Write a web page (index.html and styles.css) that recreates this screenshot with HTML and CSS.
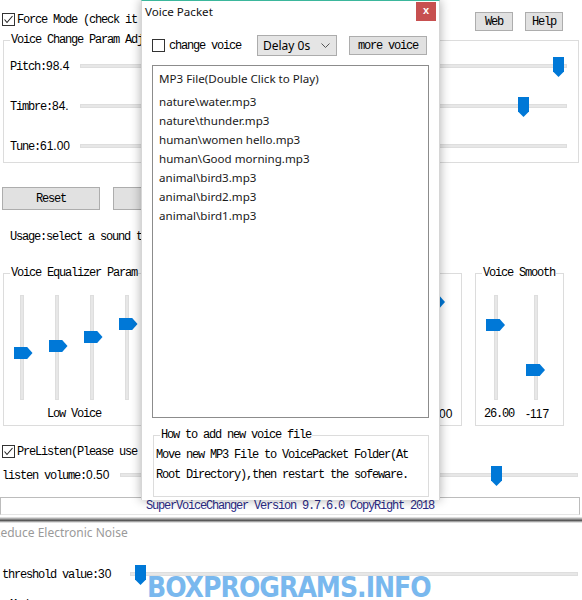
FILE: index.html
```html
<!DOCTYPE html>
<html>
<head>
<meta charset="utf-8">
<link rel="stylesheet" href="styles.css">
</head>
<body>
<div class="screen">
  <div class="main">
    <div class="toprow">
      <label class="check">
        <svg class="box" viewBox="0 0 13 13"><rect x="0.5" y="0.5" width="12" height="12" fill="#fff" stroke="#333"/><polyline points="2.5,6.5 5,9.5 10.5,3" fill="none" stroke="#222" stroke-width="1.1"/></svg>
        <span>Force Mode (check it to change voice)</span>
      </label>
      <div class="topbtns">
        <button class="btn small">Web</button>
        <button class="btn small">Help</button>
      </div>
    </div>

    <fieldset class="group g-adjust">
      <legend>Voice Change Param Adjust</legend>
      <div class="hrow">
        <span class="lbl">Pitch:<span class="num">98.4</span></span>
        <div class="htrack t-adjust"><span class="hthumb" style="left:472px"></span></div>
      </div>
      <div class="hrow">
        <span class="lbl">Timbre:<span class="num">84.</span></span>
        <div class="htrack t-adjust"><span class="hthumb" style="left:437px"></span></div>
      </div>
      <div class="hrow">
        <span class="lbl">Tune:<span class="num">61.00</span></span>
        <div class="htrack t-adjust"><span class="hthumb" style="left:200px"></span></div>
      </div>
    </fieldset>

    <div class="btnrow">
      <button class="btn wide">Reset</button>
      <button class="btn wide">Test</button>
    </div>

    <div class="usage">Usage:select a sound type and adjust the params</div>

    <div class="eqrow">
      <fieldset class="group g-eq">
        <legend>Voice Equalizer Param</legend>
        <div class="vsliders">
          <div class="vcol"><div class="vtrack"><span class="vthumb" style="top:51px"></span></div></div>
          <div class="vcol"><div class="vtrack"><span class="vthumb" style="top:44px"></span></div></div>
          <div class="vcol"><div class="vtrack"><span class="vthumb" style="top:35px"></span></div></div>
          <div class="vcol"><div class="vtrack"><span class="vthumb" style="top:22px"></span></div></div>
          <div class="vcol"><div class="vtrack"><span class="vthumb" style="top:30px"></span></div></div>
          <div class="vcol"><div class="vtrack"><span class="vthumb" style="top:40px"></span></div></div>
          <div class="vcol"><div class="vtrack"><span class="vthumb" style="top:50px"></span></div></div>
          <div class="vcol"><div class="vtrack"><span class="vthumb" style="top:52px"></span></div></div>
        </div>
        <div class="eqlabels">
          <span class="eqlabel">Low Voice</span>
          <span class="eqlabel">High Voice</span>
        </div>
      </fieldset>

      <fieldset class="group g-reduce">
        <legend>Noise Reduce</legend>
        <div class="vsliders v-right">
          <div class="vcol w40"><div class="vtrack"><span class="vthumb" style="top:40px"></span></div></div>
          <div class="vcol w40"><div class="vtrack"><span class="vthumb" style="top:0px"></span></div></div>
        </div>
        <div class="vvalues v-right">
          <span class="vval">50.00</span>
          <span class="vval">100.00</span>
        </div>
      </fieldset>

      <fieldset class="group g-smooth">
        <legend>Voice Smooth</legend>
        <div class="vsliders">
          <div class="vcol w40"><div class="vtrack"><span class="vthumb wide" style="top:23px"></span></div></div>
          <div class="vcol w40"><div class="vtrack"><span class="vthumb wide" style="top:68px"></span></div></div>
        </div>
        <div class="vvalues">
          <span class="vval mono">26.00</span>
          <span class="vval">-117</span>
        </div>
      </fieldset>
    </div>

    <label class="check pre">
      <svg class="box" viewBox="0 0 13 13"><rect x="0.5" y="0.5" width="12" height="12" fill="#fff" stroke="#333"/><polyline points="2.5,6.5 5,9.5 10.5,3" fill="none" stroke="#222" stroke-width="1.1"/></svg>
      <span>PreListen(Please use headset)</span>
    </label>

    <div class="hrow volume">
      <span class="lbl vlbl">listen volume:<span class="num">0.50</span></span>
      <div class="htrack t-volume"><span class="hthumb" style="left:370px"></span></div>
    </div>

    <div class="status">SuperVoiceChanger Version 9.7.6.0 CopyRight 2018</div>
  </div>

  <div class="edge"></div>

  <div class="second">
    <div class="sec-title">Reduce Electronic Noise</div>
    <div class="hrow thresh">
      <span class="lbl tlbl">threshold value:<span class="num">30</span></span>
      <div class="htrack t-thresh"><span class="hthumb" style="left:4px"></span></div>
    </div>
    <div class="mode">Mode</div>
  </div>

  <div class="dialog">
    <div class="dlg-title">
      <span class="dlg-name">Voice Packet</span>
      <span class="dlg-close">x</span>
    </div>
    <div class="dlg-body">
      <div class="dlg-row">
        <label class="check dcheck">
          <svg class="box" viewBox="0 0 13 13"><rect x="0.5" y="0.5" width="12" height="12" fill="#fff" stroke="#333"/></svg>
          <span>change voice</span>
        </label>
        <div class="select">
          <span>Delay 0s</span>
          <svg class="chev" viewBox="0 0 9 5"><polyline points="0.5,0.5 4.5,4.5 8.5,0.5" fill="none" stroke="#555" stroke-width="1"/></svg>
        </div>
        <button class="btn more">more voice</button>
      </div>
      <div class="listbox">
        <div class="lhead">MP3 File(Double Click to Play)</div>
        <div class="litem">nature\water.mp3</div>
        <div class="litem">nature\thunder.mp3</div>
        <div class="litem">human\women hello.mp3</div>
        <div class="litem">human\Good morning.mp3</div>
        <div class="litem">animal\bird3.mp3</div>
        <div class="litem">animal\bird2.mp3</div>
        <div class="litem">animal\bird1.mp3</div>
      </div>
      <fieldset class="group g-howto">
        <legend>How to add new voice file</legend>
        <div class="howto">Move new MP3 File to VoicePacket Folder(At<br>Root Directory),then restart the sofeware.</div>
      </fieldset>
    </div>
  </div>

  <div class="watermark">BOXPROGRAMS.INFO</div>
</div>
</body>
</html>
```

FILE: styles.css
```css
* { box-sizing: border-box; }

body {
  margin: 0;
  background: #fff;
}

.screen {
  position: relative;
  width: 582px;
  height: 600px;
  overflow: hidden;
  background: #fff;
  font-family: "Liberation Mono", monospace;
  font-size: 12px;
  line-height: 12px;
  letter-spacing: -1.2px;
  color: #000;
}

.num {
  font-family: "Liberation Sans", sans-serif;
  letter-spacing: 0;
}

/* ---------- top row ---------- */
.toprow {
  display: flex;
  justify-content: space-between;
  align-items: flex-start;
  height: 32px;
  padding-top: 12px;
}

.check {
  display: flex;
  align-items: center;
  gap: 2px;
  margin-left: 2px;
  margin-top: 1px;
  height: 13px;
  white-space: nowrap;
}

.box {
  width: 13px;
  height: 13px;
  flex: none;
  display: block;
}

.topbtns {
  display: flex;
  gap: 12px;
  margin-right: 19px;
}

.btn {
  font: inherit;
  letter-spacing: inherit;
  color: #000;
  background: #e1e1e1;
  border: 1px solid #adadad;
  padding: 0;
  margin: 0;
}

.btn.small {
  width: 38px;
  height: 19px;
}

.btn.wide {
  width: 98px;
  height: 23px;
}

/* ---------- groups ---------- */
.group {
  margin: 0;
  padding: 0;
  min-width: 0;
  border: 1px solid #dcdcdc;
}

.group legend {
  padding: 0 1px;
  margin-left: 6px;
  line-height: 12px;
  height: 12px;
  white-space: nowrap;
}

.g-adjust {
  margin: 2px 3px 0 3px;
  height: 129px;
}

.hrow {
  display: flex;
  align-items: center;
  height: 40px;
}

.lbl {
  flex: none;
  width: 76px;
  padding-left: 6px;
  white-space: nowrap;
}

.htrack {
  position: relative;
  flex: none;
  height: 4px;
  background: #e7e7e7;
  border: 1px solid #dedede;
}

.t-adjust { width: 487px; }

.hthumb {
  position: absolute;
  top: -8px;
  width: 11px;
  height: 20px;
  background: #0078d7;
  clip-path: polygon(0 0, 100% 0, 100% 72%, 50% 100%, 0 72%);
}

.btnrow {
  display: flex;
  gap: 13px;
  margin-top: 24px;
  margin-left: 2px;
}

.usage {
  margin-top: 21px;
  padding-left: 10px;
  white-space: nowrap;
}

/* ---------- equalizer row ---------- */
.eqrow {
  display: flex;
  margin-top: 24px;
}

.g-eq {
  margin-left: 3px;
  width: 297px;
  height: 159px;
}

.g-reduce {
  margin-left: 10px;
  width: 152px;
  height: 159px;
}

.g-smooth {
  margin-left: 13px;
  width: 89px;
  height: 159px;
}

.vsliders {
  display: flex;
  padding-top: 16px;
}

.v-right {
  justify-content: flex-end;
  padding-right: 7px;
}

.vcol {
  width: 35px;
  display: flex;
  justify-content: center;
  flex: none;
}

.vcol.w40 { width: 40px; }

.vtrack {
  position: relative;
  width: 4px;
  height: 105px;
  background: #e7e7e7;
  border: 1px solid #dedede;
}

.vthumb {
  position: absolute;
  left: -7px;
  width: 19px;
  height: 12px;
  background: #0078d7;
  clip-path: polygon(0 0, 72% 0, 100% 50%, 72% 100%, 0 100%);
}

.vthumb.wide { left: -9px; }

.eqlabels {
  display: flex;
  margin-top: 8px;
}

.eqlabel {
  width: 140px;
  text-align: center;
  white-space: nowrap;
}

.vvalues {
  display: flex;
  margin-top: 8px;
}

.vvalues.v-right {
  justify-content: flex-end;
}

.vval {
  width: 40px;
  text-align: center;
  font-family: "Liberation Sans", sans-serif;
  letter-spacing: 0;
  white-space: nowrap;
}

.g-smooth .vval:first-child { padding-left: 6px; }
.g-smooth .vval:last-child { padding-left: 3px; }

.vval.mono {
  font-family: "Liberation Mono", monospace;
  letter-spacing: -1.2px;
}

/* ---------- prelisten / volume ---------- */
.check.pre {
  margin-top: 19px;
}

.volume {
  margin-top: 6px;
  height: 22px;
}

.vlbl {
  width: 120px;
  padding-left: 2px;
}

.t-volume { width: 458px; }

.status {
  margin-top: 11px;
  width: 580px;
  height: 18px;
  border: 1px solid #bcbcbc;
  border-bottom-color: #e6e6e6;
  text-align: center;
  line-height: 16px;
  color: #2a2a86;
  white-space: nowrap;
}

.edge {
  margin-top: 2px;
  height: 6px;
  background: linear-gradient(#f2f2f2, #8a8a8a 40%, #4a4a4a 55%, #b8b8b8 80%, #fafafa);
}

/* ---------- second window ---------- */
.second {
  padding-top: 4px;
}

.sec-title {
  margin-left: -7px;
  font-family: "Noto Sans", sans-serif;
  letter-spacing: 0;
  font-size: 12px;
  line-height: 12px;
  color: #9a9a9a;
  white-space: nowrap;
}

.thresh {
  margin-top: 24px;
  height: 22px;
}

.tlbl {
  width: 130px;
  padding-left: 2px;
}

.t-thresh { width: 448px; }

.mode {
  margin-top: 14px;
  padding-left: 10px;
}

/* ---------- dialog window ---------- */
.dialog {
  position: absolute;
  left: 141px;
  top: 0;
  width: 299px;
  height: 500px;
  background: #fff;
  border-top: 1px solid #3bb79c;
  border-left: 1px solid #d6d6d6;
  border-right: 1px solid #d6d6d6;
  box-shadow: 0 0 10px rgba(0, 0, 0, 0.32);
}

.dlg-title {
  display: flex;
  justify-content: space-between;
  align-items: flex-start;
  height: 24px;
}

.dlg-name {
  padding-left: 3px;
  margin-top: 4px;
  font-family: "Noto Sans", sans-serif;
  letter-spacing: 0;
  font-size: 11.6px;
  line-height: 14px;
  color: #111;
}

.dlg-close {
  width: 20px;
  height: 19px;
  margin-top: 1px;
  margin-right: 3px;
  background: #c75050;
  color: #fff;
  font-family: "Liberation Sans", sans-serif;
  letter-spacing: 0;
  font-size: 11px;
  font-weight: bold;
  line-height: 17px;
  text-align: center;
}

.dlg-body {
  padding: 10px 0 0 10px;
}

.dlg-row {
  display: flex;
  align-items: center;
  height: 21px;
}

.check.dcheck {
  width: 105px;
  margin: 0;
  gap: 4px;
}

.select {
  width: 80px;
  height: 21px;
  display: flex;
  align-items: center;
  justify-content: space-between;
  padding: 0 6px 0 5px;
  background: #e5e5e5;
  border: 1px solid #acacac;
  font-family: "Noto Sans", sans-serif;
  letter-spacing: 0;
  font-size: 12px;
}

.chev {
  width: 9px;
  height: 5px;
  display: block;
}

.btn.more {
  margin-left: 12px;
  width: 78px;
  height: 19px;
}

.listbox {
  margin-top: 9px;
  width: 277px;
  height: 353px;
  border: 1px solid #8c8c8c;
  padding: 3px 0 0 6px;
  font-family: "Noto Sans", sans-serif;
  letter-spacing: 0;
  font-size: 11.6px;
  line-height: 19px;
  color: #1a1a1a;
}

.lhead {
  margin-bottom: 4px;
}

.g-howto {
  margin: 11px 0 0 1px;
  width: 276px;
  height: 68px;
}

.howto {
  padding: 4px 0 0 2px;
  line-height: 20px;
  white-space: nowrap;
}

/* ---------- watermark ---------- */
.watermark {
  position: absolute;
  left: 147px;
  top: 573px;
  font-family: "DejaVu Sans Condensed", "DejaVu Sans", sans-serif;
  font-weight: bold;
  font-size: 28px;
  line-height: 30px;
  letter-spacing: -1px;
  color: #79b8ee;
  white-space: nowrap;
}
```
